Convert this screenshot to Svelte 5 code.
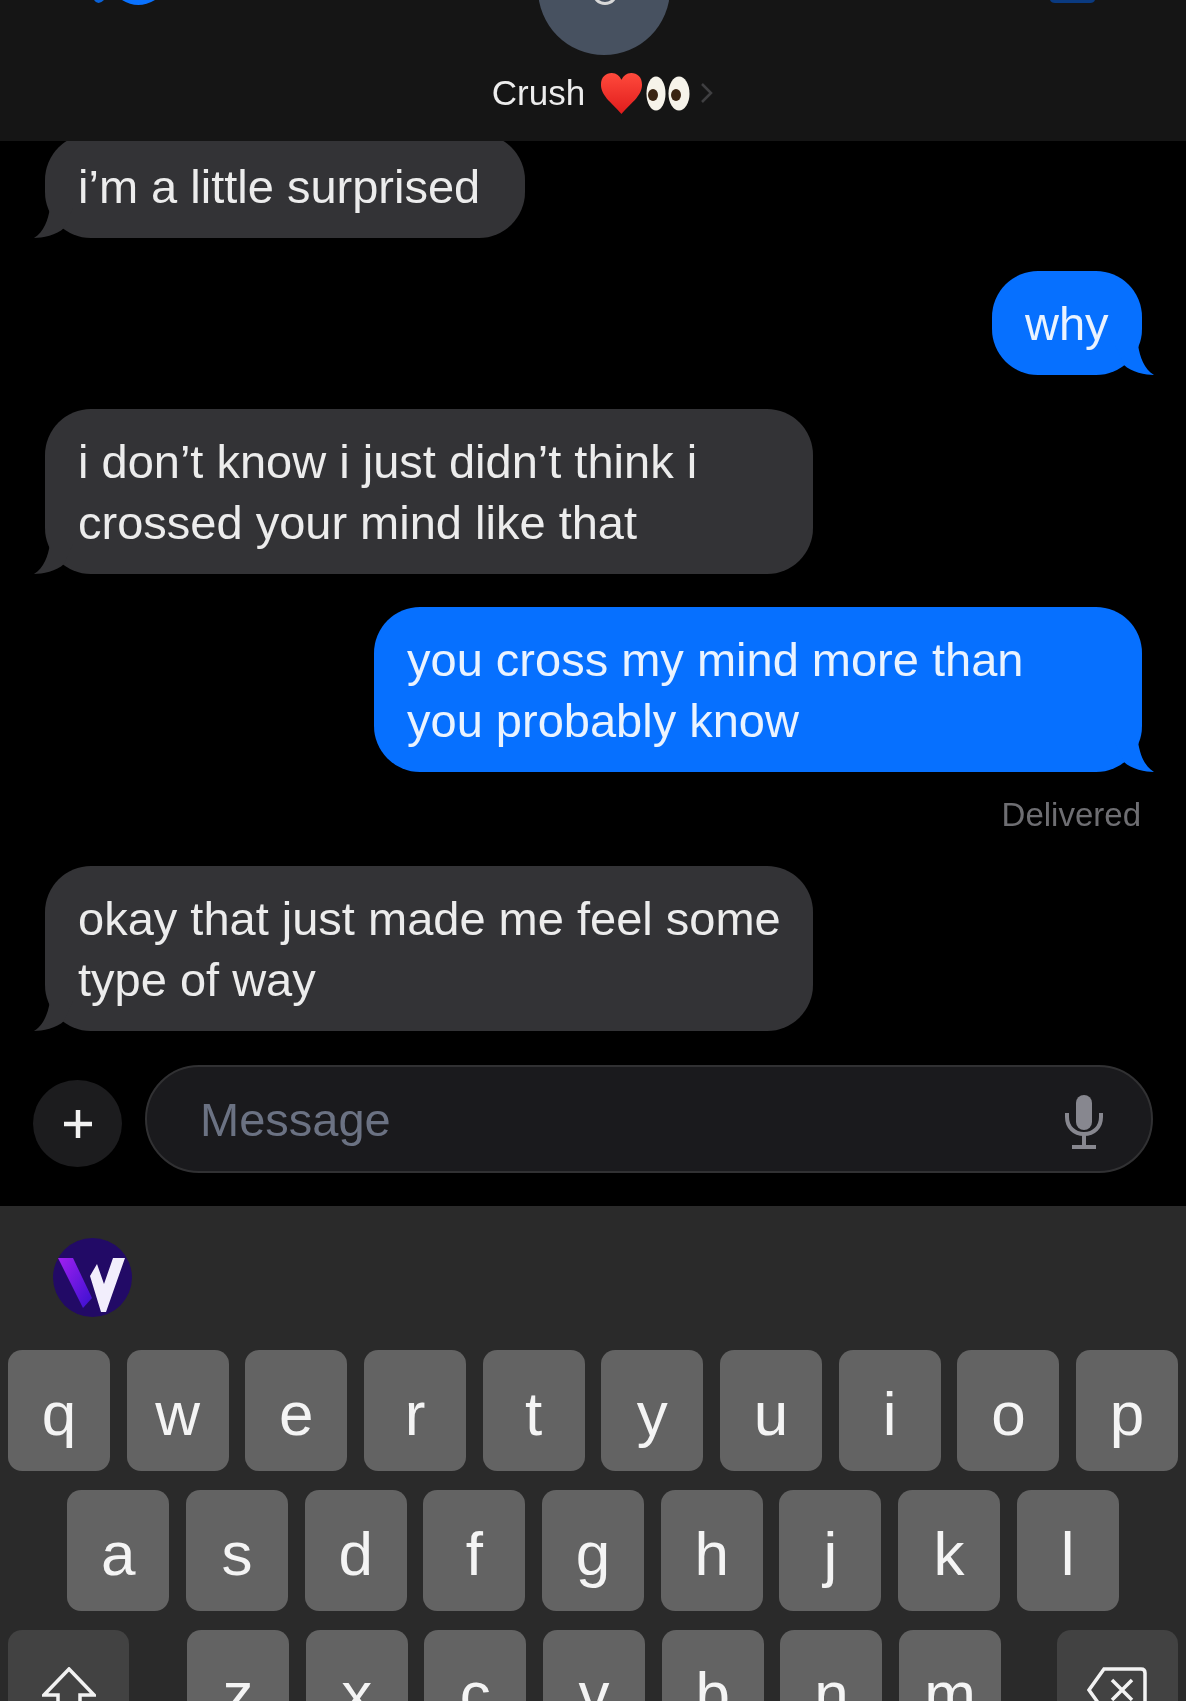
<script lang="ts">
  const rows = [
    ["q", "w", "e", "r", "t", "y", "u", "i", "o", "p"],
    ["a", "s", "d", "f", "g", "h", "j", "k", "l"],
    ["z", "x", "c", "v", "b", "n", "m"],
  ];

  const thread = [
    { from: "them", width: 480, lines: ["i’m a little surprised"] },
    { from: "me", width: 150, lines: ["why"] },
    { from: "them", width: 768, lines: ["i don’t know i just didn’t think i", "crossed your mind like that"] },
    { from: "me", width: 768, lines: ["you cross my mind more than", "you probably know"], delivered: true },
    { from: "them", width: 768, lines: ["okay that just made me feel some", "type of way"] },
  ];
</script>

<div class="phone">
  <header class="top">
    <div class="top-icons">
      <svg class="back" width="70" height="6" viewBox="0 0 70 6">
        <path d="M4 0 Q8 6 14 0 Z" fill="#0a62d8" />
        <path d="M32 0 Q48 10 65 0 Z" fill="#0a72ff" />
      </svg>
      <div class="avatar">
        <span class="avatar-head"></span>
      </div>
      <svg class="video" width="45" height="4" viewBox="0 0 45 4">
        <path d="M0 0 Q1 3 5 3 H40 Q44 3 45 0 Z" fill="#0a3a80" />
      </svg>
    </div>
    <div class="contact">
      <span class="name">Crush</span>
      <svg class="heart" width="43" height="43" viewBox="0 0 44 44">
        <defs>
          <linearGradient id="heartfill" x1="0" y1="0" x2="0" y2="1">
            <stop offset="0" stop-color="#ff4a3c" />
            <stop offset="1" stop-color="#e01c1c" />
          </linearGradient>
        </defs>
        <path d="M22 43 C14 33 1 25 1 13 C1 5 6 1 12 1 C17 1 20 4 22 8 C24 4 27 1 32 1 C38 1 43 5 43 13 C43 25 30 33 22 43 Z" fill="url(#heartfill)" />
      </svg>
      <svg class="eyes" width="44" height="35" viewBox="0 0 44 35">
        <ellipse cx="10" cy="17.500" rx="9.500" ry="17" fill="#f6f3ea" />
        <ellipse cx="33" cy="17.500" rx="10.500" ry="17" fill="#f6f3ea" />
        <ellipse cx="7" cy="19" rx="5" ry="6" fill="#3a2412" />
        <ellipse cx="30" cy="19" rx="5" ry="6" fill="#3a2412" />
      </svg>
      <svg class="chev" width="13" height="20" viewBox="0 0 13 20">
        <path d="M2 1 L11 10 L2 19" stroke="#3f3f41" stroke-width="2.500" fill="none" />
      </svg>
    </div>
  </header>

  <main class="thread">
    {#each thread as msg}
      <div class="row {msg.from}">
        <div class="bubble" style="width: {msg.width}px">
          {#each msg.lines as line}
            <div>{line}</div>
          {/each}
          <svg class="tail" width="40" height="30" viewBox="0 0 40 30">
            <path d="M17 0 C15 12 11 24 1 30 C9 30 24 27 31 20 L40 0 Z" />
          </svg>
        </div>
      </div>
      {#if msg.delivered}
        <div class="delivered">Delivered</div>
      {/if}
    {/each}
  </main>

  <section class="composer">
    <div class="plus">
      <svg width="28" height="28" viewBox="0 0 28 28">
        <path d="M14 0 V28 M0 14 H28" stroke="#f2f2f2" stroke-width="4.500" />
      </svg>
    </div>
    <div class="field">
      <span class="placeholder">Message</span>
      <svg class="mic" width="38" height="54" viewBox="0 0 38 54">
        <rect x="11" y="0" width="16" height="35" rx="8" fill="#87878f" />
        <path d="M2 18 V22 C2 32 9 39 19 39 C29 39 36 32 36 22 V18" stroke="#87878f" stroke-width="4" fill="none" />
        <path d="M19 39 V50 M7 52 H31" stroke="#87878f" stroke-width="4" fill="none" />
      </svg>
    </div>
  </section>

  <section class="keyboard">
    <div class="apps">
      <svg width="79" height="79" viewBox="0 0 79 79">
        <defs>
          <linearGradient id="wleft" x1="0" y1="0" x2="1" y2="1">
            <stop offset="0" stop-color="#a020f0" />
            <stop offset="1" stop-color="#3a10d0" />
          </linearGradient>
        </defs>
        <circle cx="39.500" cy="39.500" r="39.500" fill="#220a66" />
        <path d="M5 20 L20 20 L39 60 L30 70 Z" fill="url(#wleft)" />
        <path d="M37 38 L44 26 L51 46 L60 20 L72 20 L53 74 L48 74 Z" fill="#f2eefc" />
      </svg>
    </div>
    <div class="keys">
      {#each rows as row, i}
        <div class="key-row r{i}">
          {#if i === 2}
            <div class="key fn">
              <svg width="54" height="54" viewBox="0 0 54 54">
                <path d="M27 2 L52 28 H38 V52 H16 V28 H2 Z" stroke="#f2f2f2" stroke-width="3.500" fill="none" />
              </svg>
            </div>
          {/if}
          {#each row as letter}
            <div class="key">{letter}</div>
          {/each}
          {#if i === 2}
            <div class="key fn">
              <svg width="60" height="46" viewBox="0 0 60 46">
                <path d="M17 2 H54 Q58 2 58 6 V40 Q58 44 54 44 H17 L2 23 Z" stroke="#f2f2f2" stroke-width="3.500" fill="none" />
                <path d="M25 13 L45 33 M45 13 L25 33" stroke="#f2f2f2" stroke-width="3.500" />
              </svg>
            </div>
          {/if}
        </div>
      {/each}
    </div>
  </section>
</div>

<style>
  :global(body) {
    margin: 0;
    background: #000;
  }

  .phone {
    width: 1186px;
    height: 1701px;
    overflow: hidden;
    background: #000;
    font-family: "Liberation Sans", Arial, sans-serif;
    display: flex;
    flex-direction: column;
    /* the source is a soft, upscaled screenshot */
    filter: blur(0.6px);
  }

  .top {
    position: relative;
    z-index: 2;
    height: 141px;
    flex: none;
    background: #151515;
  }

  .top-icons {
    height: 55px;
    position: relative;
    display: flex;
    justify-content: space-between;
    padding: 0 91px 0 90px;
  }

  .back,
  .video {
    display: block;
  }

  .avatar {
    position: absolute;
    left: 538px;
    top: -77px;
    width: 132px;
    height: 132px;
    border-radius: 50%;
    background: #475160;
  }

  .avatar-head {
    position: absolute;
    left: 54px;
    top: 56px;
    width: 26px;
    height: 26px;
    border-radius: 50%;
    border: 3px solid #d8d8d8;
    box-sizing: border-box;
  }

  .contact {
    display: flex;
    align-items: center;
    justify-content: center;
    height: 76px;
    color: #ececec;
    font-size: 35px;
    padding-left: 19px;
  }

  .name {
    margin-right: 15px;
  }

  .heart {
    margin-right: 3px;
  }

  .eyes {
    margin-right: 10px;
  }

  .thread {
    flex: none;
    height: 931px;
    box-sizing: border-box;
    margin-top: -7px;
    display: flex;
    flex-direction: column;
  }

  .row {
    display: flex;
    margin-bottom: 33px;
    padding: 0 44px 0 45px;
  }

  .row.me {
    justify-content: flex-end;
    margin-bottom: 34px;
  }

  .bubble {
    position: relative;
    box-sizing: border-box;
    font-size: 47px;
    line-height: 61px;
    padding: 21.500px 0 21.500px 33px;
    border-radius: 46px;
    color: #ececec;
    white-space: nowrap;
  }

  .them .bubble {
    background: #333336;
  }

  .me .bubble {
    background: #0670ff;
    color: #eaf3ff;
  }

  .tail {
    position: absolute;
    bottom: 0;
  }

  .them .tail {
    left: -12px;
    fill: #333336;
  }

  .me .tail {
    right: -13px;
    fill: #0670ff;
    transform: scaleX(-1);
  }

  .delivered {
    text-align: right;
    font-size: 33px;
    line-height: 36px;
    color: #6e6e72;
    padding-right: 45px;
    margin-top: -9px;
    margin-bottom: 33px;
  }

  .composer {
    flex: none;
    height: 141px;
    box-sizing: border-box;
    display: flex;
    align-items: flex-start;
    padding: 0 33px;
    gap: 23px;
  }

  .plus {
    width: 89px;
    height: 87px;
    flex: none;
    margin-top: 15px;
    border-radius: 50%;
    background: #1c1c1e;
    display: flex;
    align-items: center;
    justify-content: center;
  }

  .field {
    flex: 1;
    height: 108px;
    box-sizing: border-box;
    border: 2px solid #313133;
    border-radius: 54px;
    background: #1a1a1d;
    display: flex;
    align-items: center;
    justify-content: space-between;
    padding: 0 48px 0 53px;
  }

  .placeholder {
    font-size: 47px;
    color: #6b7283;
  }

  .mic {
    margin-top: 6px;
  }

  .keyboard {
    flex: 1;
    background: #2a2a2a;
    padding: 32px 8px 0 8px;
    overflow: hidden;
  }

  .apps {
    height: 79px;
    padding-left: 45px;
    margin-bottom: 33px;
  }

  .keys {
    display: flex;
    flex-direction: column;
    gap: 19px;
  }

  .key-row {
    display: flex;
    justify-content: center;
    gap: 16.700px;
  }

  .key {
    width: 102px;
    height: 121px;
    flex: none;
    box-sizing: border-box;
    padding-top: 6px;
    border-radius: 14px;
    background: #636363;
    color: #f4f4f4;
    font-size: 62px;
    display: flex;
    align-items: center;
    justify-content: center;
  }

  .key.fn {
    width: 121px;
    padding-top: 37px;
    align-items: flex-start;
    background: #424242;
  }

  .r2 .key.fn:first-child {
    margin-right: 41px;
  }

  .r2 .key.fn:last-child {
    margin-left: 39px;
  }
</style>
